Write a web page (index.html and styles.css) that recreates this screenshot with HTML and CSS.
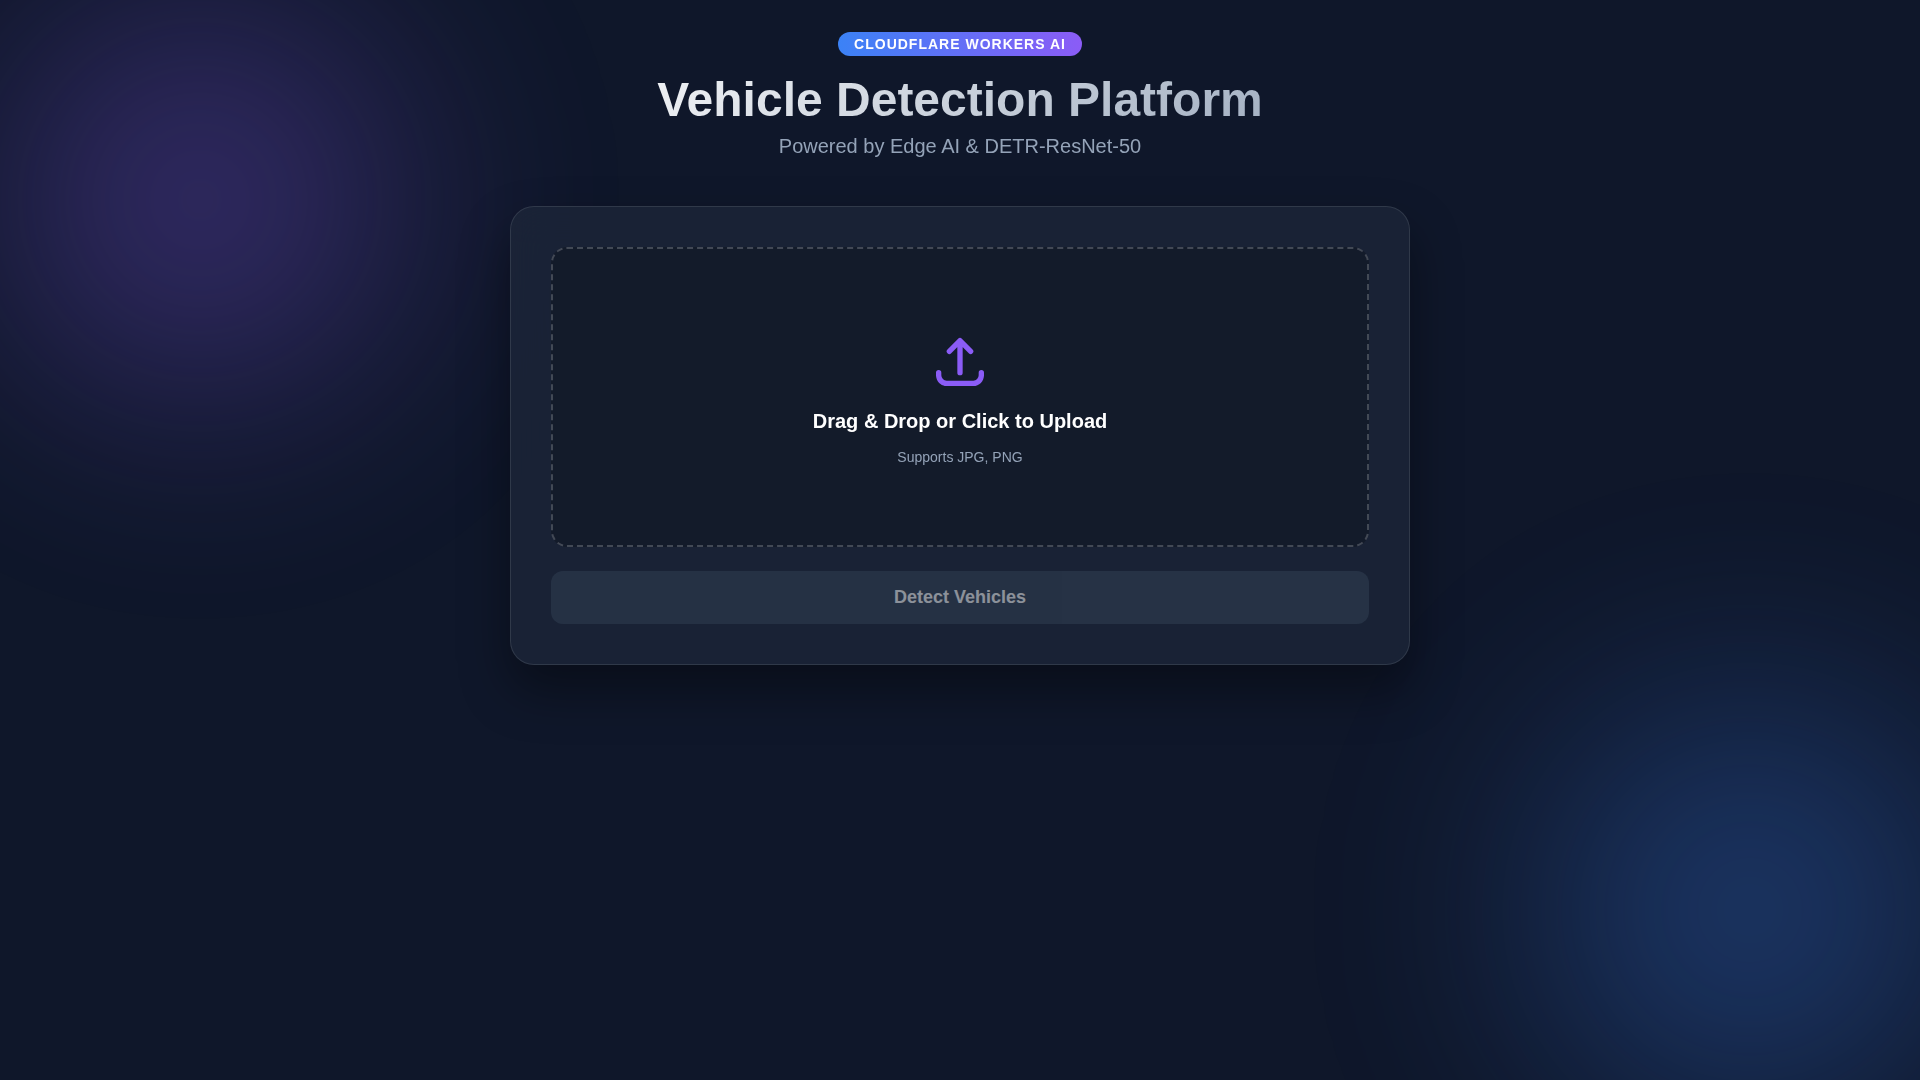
FILE: index.html
```html
<!DOCTYPE html>
<html lang="en">
<head>
    <meta charset="UTF-8">
    <meta name="viewport" content="width=device-width, initial-scale=1.0">
    <title>Vehicle Detection Platform</title>
    <link rel="stylesheet" href="styles.css">
</head>
<body>
    <!-- Background glows -->
    <div class="glow glow-purple"></div>
    <div class="glow glow-blue"></div>

    <div class="container">
        <header>
            <span class="badge">Cloudflare Workers AI</span>
            <h1>Vehicle Detection Platform</h1>
            <p class="subtitle">Powered by Edge AI &amp; DETR-ResNet-50</p>
        </header>

        <main class="card">
            <label class="drop-zone" id="drop-zone" for="file-input">
                <svg class="upload-icon" viewBox="0 0 24 24" fill="none" stroke="currentColor" stroke-width="2" stroke-linecap="round" stroke-linejoin="round" aria-hidden="true">
                    <path d="M4 16v1a3 3 0 003 3h10a3 3 0 003-3v-1m-4-8l-4-4m0 0L8 8m4-4v12"></path>
                </svg>
                <span class="drop-title">Drag &amp; Drop or Click to Upload</span>
                <span class="drop-hint">Supports JPG, PNG</span>
            </label>
            <input type="file" id="file-input" accept="image/jpeg, image/png" hidden>

            <button type="button" class="btn" id="detect-btn" disabled>Detect Vehicles</button>
        </main>
    </div>

    <script>
        const dropZone = document.getElementById('drop-zone');
        const fileInput = document.getElementById('file-input');
        const detectBtn = document.getElementById('detect-btn');

        // Enable the button once an image has been picked
        fileInput.addEventListener('change', () => {
            detectBtn.disabled = fileInput.files.length === 0;
        });

        dropZone.addEventListener('dragover', (e) => {
            e.preventDefault();
            dropZone.classList.add('dragover');
        });

        dropZone.addEventListener('dragleave', () => {
            dropZone.classList.remove('dragover');
        });

        dropZone.addEventListener('drop', (e) => {
            e.preventDefault();
            dropZone.classList.remove('dragover');
            fileInput.files = e.dataTransfer.files;
            detectBtn.disabled = fileInput.files.length === 0;
        });
    </script>
</body>
</html>
```
FILE: styles.css
```css
:root {
    --bg: #0f172a;
    --primary: #3b82f6;
    --accent: #8b5cf6;
    --text: #ffffff;
    --muted: #94a3b8;
    --glass: rgba(30, 40, 59, 0.7);
    --glass-border: rgba(255, 255, 255, 0.1);
}

* {
    box-sizing: border-box;
    margin: 0;
    padding: 0;
}

body {
    font-family: 'Liberation Sans', Arial, sans-serif;
    background: var(--bg);
    color: var(--text);
    min-height: 100vh;
    overflow-x: hidden;
}

.glow {
    position: fixed;
    border-radius: 50%;
    filter: blur(100px);
    opacity: 0.4;
    z-index: -1;
}

.glow-purple {
    top: -100px;
    left: -100px;
    width: 600px;
    height: 600px;
    background: radial-gradient(circle, var(--accent) 0%, transparent 70%);
}

.glow-blue {
    right: -150px;
    bottom: -150px;
    width: 640px;
    height: 640px;
    background: radial-gradient(circle, var(--primary) 0%, transparent 70%);
}

.container {
    max-width: 964px;
    margin: 0 auto;
    padding: 32px;
}

header {
    display: flex;
    flex-direction: column;
    align-items: center;
    margin-bottom: 48px;
    text-align: center;
}

.badge {
    padding: 4px 16px;
    border-radius: 12px;
    background: linear-gradient(90deg, var(--primary), var(--accent));
    font-size: 14px;
    font-weight: bold;
    line-height: 16px;
    letter-spacing: 1px;
    text-transform: uppercase;
    margin-bottom: 16px;
}

h1 {
    width: 100%;
    font-size: 48px;
    line-height: 55px;
    margin-bottom: 8px;
    background: linear-gradient(135deg, #ffffff 0%, var(--muted) 100%);
    -webkit-background-clip: text;
    background-clip: text;
    color: transparent;
}

.subtitle {
    color: var(--muted);
    font-size: 20px;
    line-height: 23px;
}

.card {
    padding: 40px;
    background: var(--glass);
    border: 1px solid var(--glass-border);
    border-radius: 24px;
    box-shadow: 0 25px 50px rgba(0, 0, 0, 0.4);
    backdrop-filter: blur(20px);
}

.drop-zone {
    display: flex;
    flex-direction: column;
    align-items: center;
    justify-content: center;
    gap: 16px;
    min-height: 300px;
    margin-bottom: 24px;
    border: 2px dashed rgba(255, 255, 255, 0.2);
    border-radius: 16px;
    background: rgba(0, 0, 0, 0.2);
    cursor: pointer;
}

.drop-zone:hover,
.drop-zone.dragover {
    border-color: var(--accent);
}

.upload-icon {
    width: 64px;
    height: 64px;
    color: var(--accent);
}

.drop-title {
    font-size: 20px;
    font-weight: bold;
    line-height: 23px;
}

.drop-hint {
    color: var(--muted);
    font-size: 14px;
    line-height: 16px;
}

.btn {
    width: 100%;
    padding: 16px;
    border: none;
    border-radius: 12px;
    background: linear-gradient(90deg, var(--primary), var(--accent));
    color: var(--text);
    font-family: inherit;
    font-size: 18px;
    font-weight: bold;
    line-height: 21px;
    cursor: pointer;
}

.btn:disabled {
    background: #334155;
    opacity: 0.5;
    cursor: not-allowed;
}
```
